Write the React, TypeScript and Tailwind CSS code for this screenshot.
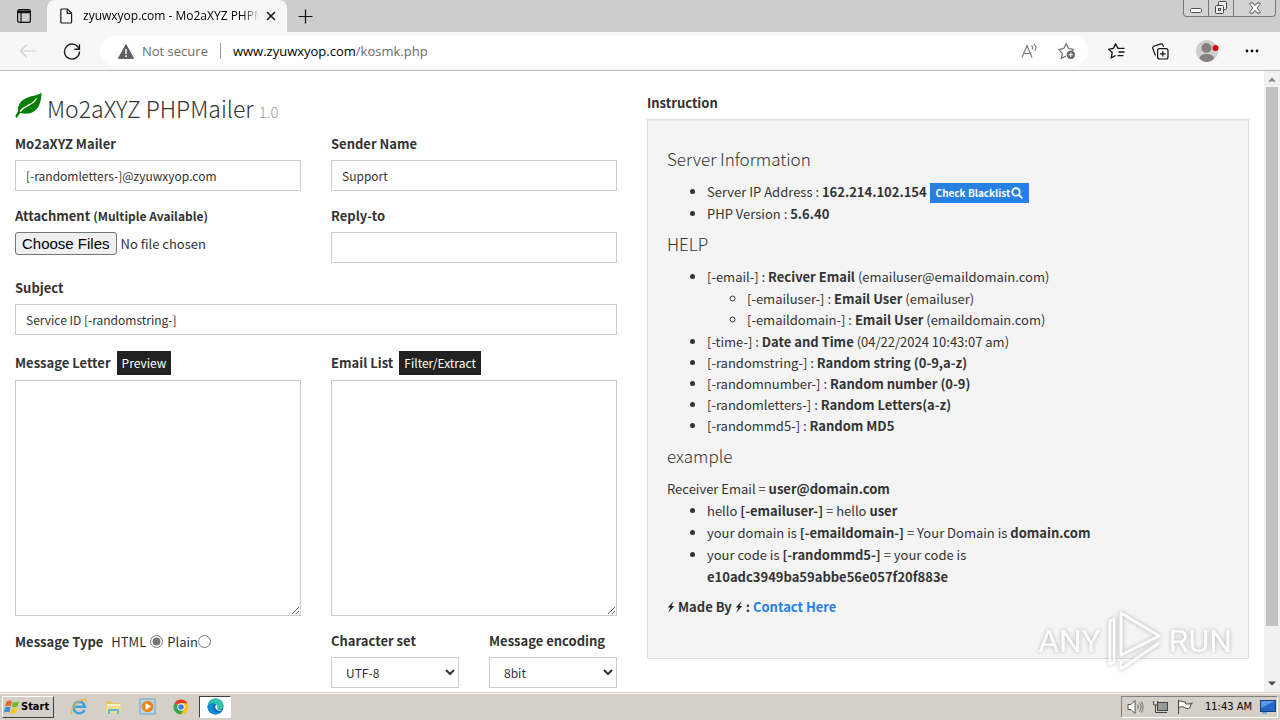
import React, { useState } from 'react';

const HELP_ITEMS = [
  { tag: '[-time-]', name: 'Date and Time', note: '(04/22/2024 10:43:07 am)' },
  { tag: '[-randomstring-]', name: 'Random string (0-9,a-z)' },
  { tag: '[-randomnumber-]', name: 'Random number (0-9)' },
  { tag: '[-randomletters-]', name: 'Random Letters(a-z)' },
  { tag: '[-randommd5-]', name: 'Random MD5' },
];

const inputClass =
  "block w-full h-[31px] border border-[#cccccc] bg-white px-[10px] text-[12px] text-[#333333] outline-none focus:border-[#66afe9]";
const labelClass = 'block font-bold leading-[19px] mb-[7px]';
const areaClass =
  'block w-full h-[236px] border border-[#cccccc] bg-white px-[10px] py-[5px] text-[12px] resize-y outline-none focus:border-[#66afe9]';

const TabStrip: React.FC = () => (
  <div className="flex h-8 shrink-0 bg-[#cdcdcd]">
    <button type="button" aria-label="Tab actions" className="flex w-[47px] items-center justify-center">
      <svg width="16" height="16" viewBox="0 0 16 16" fill="none" stroke="#111" strokeWidth="1.2">
        <rect x="1.6" y="1.6" width="12.8" height="12.8" rx="2" />
        <path d="M2 3.4h12M2 4.4h12" strokeWidth="1.8" />
        <path d="M5 5v9" />
      </svg>
    </button>
    <div className="flex w-[240px] items-center rounded-t-lg bg-[#f7f7f7] pl-3 pr-[10px]">
      <svg width="14" height="16" viewBox="0 0 14 16" fill="none" stroke="#1b1b1b" strokeWidth="1.2" className="shrink-0">
        <path d="M2.8 1h5.6L12.6 5v9a1 1 0 0 1-1 1H2.8a1 1 0 0 1-1-1V2a1 1 0 0 1 1-1z" />
        <path d="M8.2 1.2V5.4h4.2" />
      </svg>
      <span className="ml-[10px] min-w-0 flex-1 overflow-hidden whitespace-nowrap text-[12px] leading-4 text-black [mask-image:linear-gradient(to_right,black_88%,transparent_97%)]">
        zyuwxyop.com - Mo2aXYZ PHPM
      </span>
      <button type="button" aria-label="Close tab" className="flex h-4 w-3 items-center justify-center">
        <svg width="10" height="10" viewBox="0 0 10 10" stroke="#111" strokeWidth="1.5">
          <path d="M1 1l8 8M9 1l-8 8" />
        </svg>
      </button>
    </div>
    <button type="button" aria-label="New tab" className="flex w-9 items-center justify-center">
      <svg width="15" height="15" viewBox="0 0 15 15" stroke="#111" strokeWidth="1.2">
        <path d="M7.5 0.5v14M0.5 7.5h14" />
      </svg>
    </button>
    <div className="ml-auto mr-1 flex h-[17px] rounded-b border border-t-0 border-[#777] bg-[#d3d3d3]">
      <button type="button" aria-label="Minimize" className="flex w-[25px] items-center justify-center border-r border-[#777]">
        <svg width="12" height="12" viewBox="0 0 12 12" fill="#fff" stroke="#555">
          <rect x="0.5" y="6.5" width="11" height="4" rx="1" />
        </svg>
      </button>
      <button type="button" aria-label="Restore" className="flex w-[25px] items-center justify-center border-r border-[#777]">
        <svg width="14" height="14" viewBox="0 0 14 14" fill="#eee" stroke="#444">
          <rect x="4.5" y="0.5" width="8" height="8" rx="1" />
          <rect x="1.5" y="4.5" width="8" height="8" rx="1" />
          <rect x="4.5" y="7.5" width="2" height="2" />
        </svg>
      </button>
      <button type="button" aria-label="Close" className="flex w-[41px] items-center justify-center">
        <svg width="12" height="12" viewBox="0 0 12 12">
          <path d="M1 1h3l2 2.6L8 1h3v1.5L8 6l3 3.5V11H8L6 8.4 4 11H1V9.5L4 6 1 2.5z" fill="#fff" stroke="#555" />
        </svg>
      </button>
    </div>
  </div>
);

const Toolbar: React.FC = () => (
  <div className="flex h-[39px] shrink-0 items-center border-b border-[#bdbdbd] bg-[#f7f7f7] pl-[18px] pr-[21px]">
    <button type="button" aria-label="Back" disabled className="flex size-5 items-center justify-center">
      <svg width="18" height="14" viewBox="0 0 18 14" fill="none" stroke="#cfcfcf" strokeWidth="1.2">
        <path d="M17.5 7H1.5M7.5 1L1.5 7l6 6" />
      </svg>
    </button>
    <button type="button" aria-label="Refresh" className="ml-6 flex size-5 items-center justify-center">
      <svg width="18" height="18" viewBox="0 0 18 18" fill="none" stroke="#1b1b1b" strokeWidth="1.4">
        <path d="M16.2 7.5A7.5 7.5 0 1 0 16.5 9.6" />
        <path d="M16.4 2.2v5h-5" />
      </svg>
    </button>
    <div className="ml-[18px] flex h-[30px] min-w-0 flex-1 items-center rounded-full bg-white pl-[18px] pr-3">
      <svg width="16" height="15" viewBox="0 0 16 15" className="shrink-0">
        <path d="M8 .6L15.6 14.4H.4z" fill="#5f5f5f" stroke="#5f5f5f" strokeLinejoin="round" />
        <path d="M8 5v5M8 11.3v1.6" stroke="#fff" strokeWidth="1.5" />
      </svg>
      <span className="ml-2 text-[13px] leading-5 text-[#6b6b6b]">Not secure</span>
      <span className="mx-3 h-4 w-px bg-[#999]" />
      <div role="textbox" aria-label="Address" className="min-w-0 flex-1 text-[13px] leading-5 text-[#6b6b6b]">
        <span className="text-black">www.zyuwxyop.com</span>/kosmk.php
      </div>
      <div className="flex items-center gap-5">
        <button type="button" aria-label="Read aloud">
          <svg width="17" height="16" viewBox="0 0 17 16" fill="none" stroke="#777" strokeWidth="1.1">
            <path d="M1 14.5L6 2.5l5 12M2.8 10.5h6.4M10.5 2.5c1 .8 1.3 2.4.6 4M13 .8c2 1.8 2.3 4.8.8 7.2" />
          </svg>
        </button>
        <button type="button" aria-label="Add to favorites">
          <svg width="18" height="18" viewBox="0 0 18 18" fill="none" stroke="#666" strokeWidth="1.1">
            <path d="M8 14l-4.6 2.4.9-5.3L.8 7.4l5-.8L8.2 1.8l2.4 4.8 5 .8-1.5 1.5" />
            <circle cx="12.8" cy="12.8" r="4.2" fill="#666" stroke="none" />
            <path d="M12.8 10.5v4.6M10.5 12.8h4.6" stroke="#fff" />
          </svg>
        </button>
      </div>
    </div>
    <div className="ml-5 flex items-center">
      <button type="button" aria-label="Favorites">
        <svg width="17" height="16" viewBox="0 0 17 16" fill="none" stroke="#111" strokeWidth="1.3">
          <path d="M16.5 5.4H10L7.6 1 5.4 5.4l-4.7.8 3.5 3.4-.9 5.2 4.4-2.3M10.5 9h6M9.5 12.6h6" />
        </svg>
      </button>
      <button type="button" aria-label="Collections" className="ml-[27px]">
        <svg width="17" height="17" viewBox="0 0 17 17" fill="none" stroke="#111" strokeWidth="1.2">
          <rect x="5.6" y="5.6" width="10.4" height="10.4" rx="2" />
          <path d="M10.8 8v5.6M8 10.8h5.6M3.6 12.6L2.8 11 .8 5.2a1.5 1.5 0 0 1 1-1.9L9 .9a1.5 1.5 0 0 1 1.9 1l.6 2" />
        </svg>
      </button>
      <button type="button" aria-label="Profile" className="ml-[26px]">
        <svg width="24" height="24" viewBox="0 0 24 24">
          <circle cx="12" cy="12" r="11" fill="#cfcfcf" />
          <circle cx="11.5" cy="9" r="5" fill="#858080" />
          <path d="M4.5 19.5c0-3 3-4.5 7-4.5s7.5 1.5 7.5 4.5c-4 4.5-10.5 4.5-14.5 0z" fill="#858080" />
          <circle cx="20.5" cy="9" r="3" fill="#e3000f" />
        </svg>
      </button>
      <button type="button" aria-label="Settings and more" className="ml-[26px]">
        <svg width="14" height="4" viewBox="0 0 14 4" fill="#111">
          <circle cx="2" cy="2" r="1.4" />
          <circle cx="7" cy="2" r="1.4" />
          <circle cx="12" cy="2" r="1.4" />
        </svg>
      </button>
    </div>
  </div>
);

const MailerForm: React.FC = () => {
  const [type, setType] = useState('html');

  return (
    <form className="min-w-0 px-[15px] pt-[21px]" onSubmit={e => e.preventDefault()}>
      <h3 className="mb-[10px] flex items-start gap-[5px] text-[23px] font-light leading-8">
        <svg width="27" height="27" viewBox="0 0 27 27">
          <path d="M26.5 .5C22 4 17 3.5 11.5 6 5 9 2.5 13.5 3.2 19L.3 24l1.2 2 4-5.2c8 2.7 15.5-.8 18.5-7.3 2-4.5 2.5-8.5 2.5-13z" fill="#007f00" />
          <path d="M5 19.5C8.500 15 13 13.500 16.500 11.500c2.500-1.500 4-3 5-5" fill="none" stroke="#fff" strokeWidth="1.3" />
        </svg>
        <span>
          Mo2aXYZ PHPMailer <small className="text-[15px] leading-none text-[#999999]">1.0</small>
        </span>
      </h3>

      <div className="grid grid-cols-2 gap-x-[30px] gap-y-[15px]">
        <div>
          <label htmlFor="senderEmail" className={labelClass}>Mo2aXYZ Mailer</label>
          <input id="senderEmail" type="text" defaultValue="[-randomletters-]@zyuwxyop.com" className={inputClass} />
        </div>
        <div>
          <label htmlFor="senderName" className={labelClass}>Sender Name</label>
          <input id="senderName" type="text" defaultValue="Support" className={inputClass} />
        </div>
        <div>
          <label htmlFor="attachment" className={labelClass}>
            Attachment <small className="text-[12px] leading-none">(Multiple Available)</small>
          </label>
          <input
            id="attachment"
            type="file"
            multiple
            className="block w-full leading-[21px] file:mr-1 file:h-[23px] file:rounded-[3px] file:border file:border-solid file:border-[#767676] file:bg-[#efefef] file:px-[6px] file:font-['Liberation_Sans'] file:text-[15px] file:leading-5 file:text-black"
          />
        </div>
        <div>
          <label htmlFor="replyTo" className={labelClass}>Reply-to</label>
          <input id="replyTo" type="text" className={inputClass} />
        </div>
        <div className="col-span-2">
          <label htmlFor="subject" className={labelClass}>Subject</label>
          <input id="subject" type="text" defaultValue="Service ID [-randomstring-]" className={inputClass} />
        </div>
        <div>
          <div className="mb-[5px] flex h-[25px] items-center gap-[6px]">
            <label htmlFor="letter" className="font-bold">Message Letter</label>
            <button type="button" className="h-6 bg-[#222222] px-[5px] text-[12px] leading-6 text-white">Preview</button>
          </div>
          <textarea id="letter" className={areaClass} />
        </div>
        <div>
          <div className="mb-[5px] flex h-[25px] items-center gap-[6px]">
            <label htmlFor="emails" className="font-bold">Email List</label>
            <button type="button" className="h-6 bg-[#222222] px-[5px] text-[12px] leading-6 text-white">Filter/Extract</button>
          </div>
          <textarea id="emails" className={areaClass} />
        </div>
        <div className="flex h-[21px] items-center">
          <span className="mr-2 font-bold">Message Type</span>
          <label htmlFor="html">HTML</label>
          <input id="html" type="radio" name="type" checked={type === 'html'} onChange={() => setType('html')} className="mx-1 size-[13px] accent-[#767676]" />
          <label htmlFor="plain">Plain</label>
          <input id="plain" type="radio" name="type" checked={type === 'plain'} onChange={() => setType('plain')} className="size-[13px] accent-[#767676]" />
        </div>
        <div className="grid grid-cols-2 gap-[30px]">
          <div>
            <label htmlFor="charset" className={labelClass}>Character set</label>
            <select id="charset" className={inputClass}>
              <option>UTF-8</option>
              <option>ISO-8859-1</option>
            </select>
          </div>
          <div>
            <label htmlFor="encoding" className={`${labelClass} whitespace-nowrap`}>Message encoding</label>
            <select id="encoding" className={inputClass}>
              <option>8bit</option>
              <option>7bit</option>
              <option>binary</option>
              <option>base64</option>
              <option>quoted-printable</option>
            </select>
          </div>
        </div>
      </div>
    </form>
  );
};

const Instructions: React.FC = () => {
  const heading = 'mt-[9px] mb-[11px] text-[17px] font-light leading-[21px]';

  return (
    <section className="min-w-0 px-[15px] pt-[22px]">
      <h2 className={labelClass}>Instruction</h2>
      <div className="border border-[#dddddd] bg-[#f4f4f4] px-[19px] pb-10 pt-[19px] shadow-[inset_0_1px_1px_rgba(0,0,0,0.05)]">
        <h4 className={heading}>Server Information</h4>
        <ul className="list-disc pl-10 pt-px">
          <li>
            Server IP Address : <b>162.214.102.154</b>{' '}
            <a href="#blacklist" className="inline-flex h-5 items-center gap-px bg-[#2780e3] px-[6px] align-middle text-[10px] font-bold leading-5 text-white">
              Check Blacklist
              <svg width="12" height="12" viewBox="0 0 12 12" fill="none" stroke="#fff" strokeWidth="1.8">
                <circle cx="5" cy="5" r="3.8" />
                <path d="M7.8 7.8l3.6 3.6" />
              </svg>
            </a>
          </li>
          <li>PHP Version : <b>5.6.40</b></li>
        </ul>

        <h4 className={heading}>HELP</h4>
        <ul className="list-disc pl-10 pt-px">
          <li>
            [-email-] : <b>Reciver Email</b> (emailuser@emaildomain.com)
            <ul className="list-[circle] py-px pl-10">
              <li>[-emailuser-] : <b>Email User</b> (emailuser)</li>
              <li>[-emaildomain-] : <b>Email User</b> (emaildomain.com)</li>
            </ul>
          </li>
          {HELP_ITEMS.map(item => (
            <li key={item.tag}>{item.tag} : <b>{item.name}</b> {item.note}</li>
          ))}
        </ul>

        <h4 className={heading}>example</h4>
        <div className="pt-px leading-[22px]">
          <p>Receiver Email = <b>user@domain.com</b></p>
          <ul className="list-disc pl-10">
            <li>hello <b>[-emailuser-]</b> = hello <b>user</b></li>
            <li>your domain is <b>[-emaildomain-]</b> = Your Domain is <b>domain.com</b></li>
            <li>
              your code is <b>[-randommd5-]</b> = your code is<br />
              <b>e10adc3949ba59abbe56e057f20f883e</b>
            </li>
          </ul>
          <p className="mt-2 flex items-center gap-[3px] font-bold">
            <Bolt /> Made By <Bolt /> : <a href="#contact" className="text-[#2780e3]">Contact Here</a>
          </p>
        </div>
      </div>
    </section>
  );
};

const Bolt: React.FC = () => (
  <svg width="8" height="12" viewBox="0 0 7 11" fill="#222">
    <path d="M6 0L.5 6h2.6L.8 11 6.5 4.6H4z" />
  </svg>
);

const Scrollbar: React.FC = () => (
  <div className="flex w-4 shrink-0 flex-col items-center bg-[#f1f1f1]">
    <svg width="16" height="16" viewBox="0 0 16 16" fill="#8b8b8b"><path d="M4 10.5L8 6.5l4 4z" /></svg>
    <div className="h-[539px] w-3 bg-[#c1c1c1]" />
    <svg width="16" height="16" viewBox="0 0 16 16" fill="#444" className="mt-auto"><path d="M4 5.5l4 4 4-4z" /></svg>
  </div>
);

const Watermark: React.FC = () => (
  <div className="pointer-events-none absolute bottom-5 right-12 flex items-center gap-[6px] font-['Roboto'] text-[32px] leading-10 text-white opacity-80 drop-shadow-[0_0_2px_rgba(0,0,0,0.35)]">
    <span>ANY</span>
    <svg width="56" height="62" viewBox="0 0 56 62" fill="none" stroke="#fff" strokeWidth="3" strokeLinejoin="round">
      <path d="M14 3v42l38-19z" />
      <path d="M7 9L3 11v43l4-2zM14 51v8L52 33" />
    </svg>
    <span>RUN</span>
  </div>
);

const Taskbar: React.FC = () => (
  <div className="flex h-7 shrink-0 items-center border-t border-[#d4d0c8] bg-[#d4cfc7] px-[2px] shadow-[inset_0_1px_0_white]">
    <button type="button" className="flex h-[22px] w-[52px] items-center gap-px border border-b-[#404040] border-l-white border-r-[#404040] border-t-white pl-px font-['DejaVu_Sans_Condensed'] text-[11px] font-bold leading-4 text-black">
      <svg width="16" height="16" viewBox="0 0 16 16">
        <path d="M2.5 2.5C4.5 1 6 1.2 8 2.2L6.8 7.3C5 6.2 3.2 6.500 1.2 7.5z" fill="#e8602c" />
        <path d="M9 2.7c2 1 4 .8 6-.4l-1.3 5c-2 1.2-4 1.3-6 .4z" fill="#76b82a" />
        <path d="M1 8.5c2-1 3.8-1.2 5.5-.2l-1.2 5c-2-1-3.800-.8-5.300.1z" fill="#3c8fd8" />
        <path d="M7.4 8.9c2 .9 4 .8 6-.3l-1.2 5c-2 1.1-4 1.2-6 .3z" fill="#f7c421" />
      </svg>
      Start
    </button>
    <div className="ml-2 flex items-center">
      <button type="button" aria-label="Internet Explorer" className="flex w-[34px] justify-center">
        <svg width="18" height="18" viewBox="0 0 18 18" fill="none">
          <path d="M14.5 12A5.8 5.8 0 1 1 15 8.7H5" stroke="#3ba3e0" strokeWidth="2.5" />
          <path d="M2.5 16C-1 14 4 6 9.5 3 13 1 17.5 0 16 4" stroke="#e8b83a" strokeWidth="1.3" />
        </svg>
      </button>
      <button type="button" aria-label="Windows Explorer" className="flex w-[34px] justify-center">
        <svg width="17" height="16" viewBox="0 0 17 16">
          <path d="M1 2h5l1 2h8v10H1z" fill="#e9c65a" />
          <path d="M2 5h13v4H2z" fill="#fff3bd" />
          <path d="M1 7h15v7H1z" fill="#f4dc87" />
          <path d="M4 15v-4h9v4" fill="none" stroke="#62b4e0" strokeWidth="2" />
        </svg>
      </button>
      <button type="button" aria-label="Media Player" className="flex w-[34px] justify-center">
        <svg width="17" height="17" viewBox="0 0 17 17">
          <rect x="1" y="1" width="15" height="15" fill="#b9d7ea" stroke="#6fa3c4" />
          <circle cx="8.5" cy="8.5" r="5.8" fill="#f08216" />
          <path d="M6.5 5v7l5.5-3.5z" fill="#fff" />
        </svg>
      </button>
      <button type="button" aria-label="Chrome" className="flex w-[34px] justify-center">
        <svg width="16" height="16" viewBox="0 0 16 16">
          <circle cx="8" cy="8" r="7.5" fill="#fbc116" />
          <path d="M8 8L1.5 4.2A7.5 7.5 0 0 1 14.5 4.2H8z" fill="#e33b2e" />
          <path d="M8 8L1.5 4.2A7.5 7.5 0 0 0 7.6 15.5L11 10z" fill="#2da94f" />
          <circle cx="8" cy="8" r="3.7" fill="#fff" />
          <circle cx="8" cy="8" r="2.8" fill="#3f7ee8" />
        </svg>
      </button>
      <button type="button" aria-label="Microsoft Edge" className="ml-px flex h-[22px] w-8 items-center justify-center border border-b-white border-l-[#404040] border-r-white border-t-[#404040] bg-white">
        <svg width="17" height="17" viewBox="0 0 17 17">
          <circle cx="8.5" cy="8.5" r="8" fill="#0d6ebd" />
          <path d="M.6 8C1 3 5 .5 8.5.5c5 0 8 3.500 8 7 0 3-2.500 4.200-4.500 4.200-2.200 0-2.400-1-1.800-2C11 7.500 8.500 5.500 6 5.500 3.500 5.500 1.300 6.500.6 8z" fill="#35c1b1" />
          <path d="M.5 8.5C1 5.500 6 4 9 6.500 6 6.500 5 9 6.200 11.500c1 2.500 4 4 7.300 3C8 19 .5 15 .5 8.500z" fill="#1589d6" />
          <path d="M9.5 6.8c-2 1-1.500 4.200 1.200 5.500 1.600.8 4 .5 5.300-.3-1.500.3-6.500.3-5.800-2.300.5-1 .3-2.300-.7-2.900z" fill="#fff" />
        </svg>
      </button>
    </div>
    <div className="ml-auto flex h-[22px] items-center border border-b-white border-l-[#808080] border-r-white border-t-[#808080] pl-[5px] pr-px">
      <svg width="17" height="16" viewBox="0 0 17 16" fill="#fff" stroke="#555">
        <path d="M1 5.5h3l4-4v13l-4-4H1z" />
        <path d="M10.5 5.5c1 1.5 1 3.5 0 5M12.5 3.5c2 3 2 6 0 9M14.5 2.500c2 3.500 2 7.500 0 11" fill="none" strokeWidth="0.8" />
      </svg>
      <svg width="17" height="16" viewBox="0 0 17 16" fill="#fff" stroke="#444" className="ml-2">
        <rect x="5.5" y="3.5" width="10" height="8" fill="#999" />
        <path d="M1.5 2v4h4V2M3.5 6v7.5h4M7 13.5h8" fill="none" />
      </svg>
      <svg width="17" height="16" viewBox="0 0 17 16" fill="#fff" stroke="#444" className="ml-2">
        <path d="M1.5 1v14M1.5 2.5c3-1.5 4 1 7 .5v1.500c2 1 4 .5 7-.5-2 1-2 3-2.500 4.500-2 1.500-4 1-5.500 0-2-1-4-1-6 0z" />
      </svg>
      <span className="ml-[11px] font-['DejaVu_Sans_Condensed'] text-[11px] leading-4 text-black">11:43 AM</span>
      <svg width="16" height="14" viewBox="0 0 16 14" className="ml-2">
        <rect x="0.5" y="0.5" width="15" height="11" fill="#2466c4" stroke="#163f7c" />
        <path d="M1 1h14L1 8z" fill="#5d9ae6" />
        <path d="M2 13h5" stroke="#5d9ae6" strokeWidth="1.5" />
      </svg>
    </div>
  </div>
);

const App: React.FC = () => (
  <div className="flex h-screen flex-col overflow-hidden bg-white font-['Open_Sans','Noto_Sans',sans-serif]">
    <TabStrip />
    <Toolbar />
    <div className="relative flex min-h-0 flex-1">
      <main className="grid min-w-0 flex-1 grid-cols-2 overflow-hidden font-['Noto_Sans_CJK_SC',sans-serif] text-[13px] leading-[21px] text-[#333333]">
        <MailerForm />
        <Instructions />
      </main>
      <Scrollbar />
      <Watermark />
    </div>
    <Taskbar />
  </div>
);

export default App;
